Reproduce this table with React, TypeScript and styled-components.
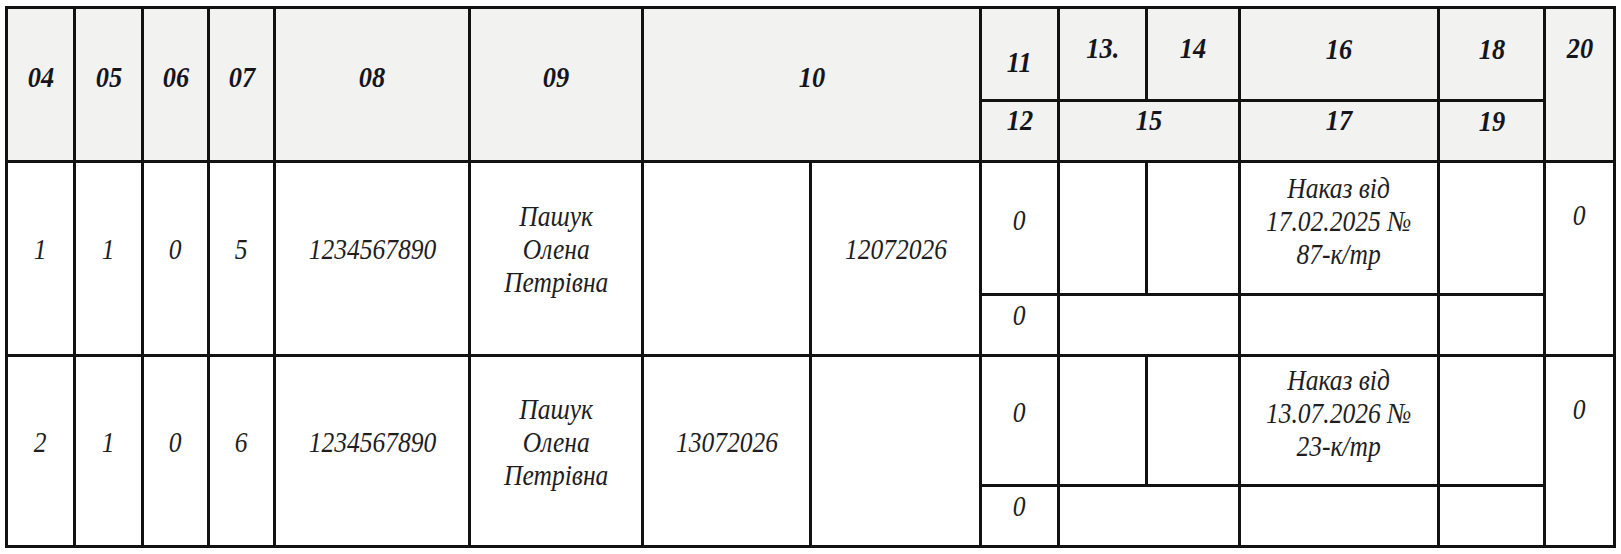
import React from 'react';
import styled, { createGlobalStyle } from 'styled-components';

const GlobalStyle = createGlobalStyle`
  html, body {
    margin: 0;
    background: #ffffff;
  }
  body {
    font-family: "Liberation Serif", "Times New Roman", serif;
  }
`;

const Page = styled.div`
  padding: 6px 0 0 5px;
`;

const Sheet = styled.div`
  display: grid;
  grid-template-columns: 65px 65px 63px 63px 192px 170px 165px 167px 75px 85px 90px 196px 103px 67px;
  grid-template-rows: 90px 58px 130px 58px 127px 58px;
  gap: 3px;
  padding: 3px;
  width: max-content;
  background: #121212;
`;

type Place = {
  $c: number;
  $r: number;
  $cs?: number;
  $rs?: number;
  $top?: number;
  $lift?: number;
};

const Cell = styled.div<Place>`
  grid-column: ${(p) => p.$c} / span ${(p) => p.$cs ?? 1};
  grid-row: ${(p) => p.$r} / span ${(p) => p.$rs ?? 1};
  display: flex;
  align-items: ${(p) => (p.$top !== undefined ? 'flex-start' : 'center')};
  justify-content: center;
  padding-top: ${(p) => p.$top ?? 0}px;
  padding-bottom: ${(p) => (p.$top !== undefined ? 0 : p.$lift ?? 16)}px;
  text-align: center;
  font-style: italic;
`;

const HeadCell = styled(Cell)`
  background: #f2f2f1;
  color: #15151c;
  font-weight: 700;
  font-size: 30px;
  line-height: 31px;
`;

const BodyCell = styled(Cell)`
  background: #ffffff;
  color: #1e1e1e;
  font-size: 29px;
  line-height: 33px;
`;

/* the printed form uses a narrow Times cut, so squeeze the glyphs a little */
const Narrow = styled.span`
  display: inline-block;
  transform: scaleX(0.88);
  white-space: nowrap;
`;

type Record = {
  r: number;
  no: string;
  a: string;
  b: string;
  c: string;
  code: string;
  name: string[];
  left?: string;
  right?: string;
  order: string[];
};

const records: Record[] = [
  {
    r: 3,
    no: '1',
    a: '1',
    b: '0',
    c: '5',
    code: '1234567890',
    name: ['Пашук', 'Олена', 'Петрівна'],
    right: '12072026',
    order: ['Наказ від', '17.02.2025 №', '87-к/тр'],
  },
  {
    r: 5,
    no: '2',
    a: '1',
    b: '0',
    c: '6',
    code: '1234567890',
    name: ['Пашук', 'Олена', 'Петрівна'],
    left: '13072026',
    order: ['Наказ від', '13.07.2026 №', '23-к/тр'],
  },
];

const T = ({ children }: { children?: React.ReactNode }) =>
  children ? <Narrow>{children}</Narrow> : null;

const Lines = ({ items }: { items: string[] }) => (
  <Narrow>
    {items.map((t) => (
      <div key={t}>{t}</div>
    ))}
  </Narrow>
);

const RecordRows = ({ rec }: { rec: Record }) => {
  const r = rec.r;
  return (
    <>
      <BodyCell $c={1} $r={r} $rs={2} $lift={18}><T>{rec.no}</T></BodyCell>
      <BodyCell $c={2} $r={r} $rs={2} $lift={18}><T>{rec.a}</T></BodyCell>
      <BodyCell $c={3} $r={r} $rs={2} $lift={18}><T>{rec.b}</T></BodyCell>
      <BodyCell $c={4} $r={r} $rs={2} $lift={18}><T>{rec.c}</T></BodyCell>
      <BodyCell $c={5} $r={r} $rs={2} $lift={18}><T>{rec.code}</T></BodyCell>
      <BodyCell $c={6} $r={r} $rs={2} $lift={18}>
        <Lines items={rec.name} />
      </BodyCell>
      <BodyCell $c={7} $r={r} $rs={2} $lift={18}><T>{rec.left}</T></BodyCell>
      <BodyCell $c={8} $r={r} $rs={2} $lift={18}><T>{rec.right}</T></BodyCell>
      <BodyCell $c={9} $r={r} $lift={16}><T>0</T></BodyCell>
      <BodyCell $c={9} $r={r + 1} $lift={20}><T>0</T></BodyCell>
      <BodyCell $c={10} $r={r} />
      <BodyCell $c={11} $r={r} />
      <BodyCell $c={10} $r={r + 1} $cs={2} />
      <BodyCell $c={12} $r={r} $lift={14}>
        <Lines items={rec.order} />
      </BodyCell>
      <BodyCell $c={12} $r={r + 1} />
      <BodyCell $c={13} $r={r} />
      <BodyCell $c={13} $r={r + 1} />
      <BodyCell $c={14} $r={r} $rs={2} $top={36}><T>0</T></BodyCell>
    </>
  );
};

const heads: { t: string; c: number; r: number; cs?: number; rs?: number; top?: number; lift?: number }[] = [
  { t: '04', c: 1, r: 1, rs: 2 },
  { t: '05', c: 2, r: 1, rs: 2 },
  { t: '06', c: 3, r: 1, rs: 2 },
  { t: '07', c: 4, r: 1, rs: 2 },
  { t: '08', c: 5, r: 1, rs: 2 },
  { t: '09', c: 6, r: 1, rs: 2 },
  { t: '10', c: 7, r: 1, rs: 2, cs: 2 },
  { t: '11', c: 9, r: 1, top: 37 },
  { t: '12', c: 9, r: 2, lift: 24 },
  { t: '13.', c: 10, r: 1, top: 23 },
  { t: '14', c: 11, r: 1, top: 23 },
  { t: '15', c: 10, r: 2, cs: 2, lift: 24 },
  { t: '16', c: 12, r: 1, top: 24 },
  { t: '17', c: 12, r: 2, lift: 24 },
  { t: '18', c: 13, r: 1, top: 24 },
  { t: '19', c: 13, r: 2, lift: 22 },
  { t: '20', c: 14, r: 1, rs: 2, top: 23 },
];

export default function App() {
  return (
    <Page>
      <GlobalStyle />
      <Sheet>
        {heads.map((h) => (
          <HeadCell key={h.t} $c={h.c} $r={h.r} $cs={h.cs} $rs={h.rs} $top={h.top} $lift={h.lift}>
            <T>{h.t}</T>
          </HeadCell>
        ))}
        {records.map((rec) => (
          <RecordRows key={rec.r} rec={rec} />
        ))}
      </Sheet>
    </Page>
  );
}
